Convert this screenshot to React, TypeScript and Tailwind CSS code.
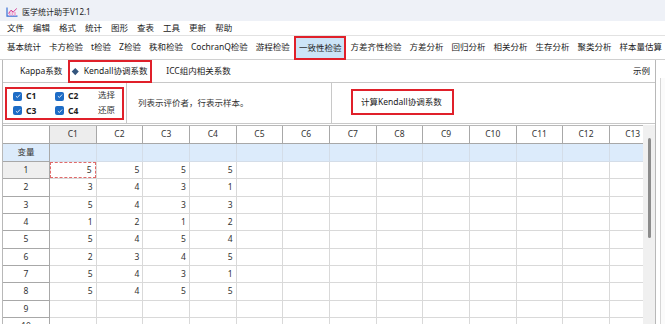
import React from 'react';

const menus = ['文件', '编辑', '格式', '统计', '图形', '查表', '工具', '更新', '帮助'];
const tools = ['基本统计', '卡方检验', 't检验', 'Z检验', '秩和检验', 'CochranQ检验', '游程检验', '一致性检验', '方差齐性检验', '方差分析', '回归分析', '相关分析', '生存分析', '聚类分析', '样本量估算'];
const cols = Array.from({ length: 13 }, (_, i) => `C${i + 1}`);
const data = [
  [5, 5, 5, 5],
  [3, 4, 3, 1],
  [5, 4, 3, 3],
  [1, 2, 1, 2],
  [5, 4, 5, 4],
  [2, 3, 4, 5],
  [5, 4, 3, 1],
  [5, 4, 5, 5],
  [],
  [],
];

const gridCols = 'grid grid-cols-[47px_repeat(13,46.67px)]';

function AppIcon() {
  return (
    <svg viewBox="0 0 12 10" className="w-[12px] h-[10px]">
      <path d="M1 0.5V9.2H11.5" fill="none" stroke="#3a6fd6" strokeWidth="1.2" />
      <rect x="3" y="5.5" width="1.6" height="3.2" fill="#f0a6cf" />
      <rect x="5.6" y="4" width="1.6" height="4.7" fill="#f0a6cf" />
      <rect x="8.2" y="5" width="1.6" height="3.7" fill="#f0a6cf" />
      <path d="M2.5 6.5L5 3.2L7.2 5L10.8 1.5" fill="none" stroke="#d6338f" strokeWidth="1" />
    </svg>
  );
}

function Check({ label }: { label: string }) {
  return (
    <div className="flex items-center">
      <div className="w-[9px] h-[9px] rounded-[2px] bg-[#1d6cc6] flex items-center justify-center">
        <svg viewBox="0 0 8 8" className="w-[6px] h-[6px]">
          <path d="M1.2 4.2L3.2 6L6.8 2" fill="none" stroke="white" strokeWidth="1.1" />
        </svg>
      </div>
      <span className="ml-[4px] font-bold text-[#222]">{label}</span>
    </div>
  );
}

export default function App() {
  return (
    <div
      className="w-[665px] h-[324px] overflow-hidden bg-white text-[8.5px] text-[#333] leading-none"
      style={{ fontFamily: '"Noto Sans", "Noto Sans CJK SC", sans-serif' }}
    >
      {/* title bar */}
      <div className="h-[21px] bg-[#eef1f7] flex items-center pl-[6px] pt-[3px]">
        <AppIcon />
        <span className="ml-[4px] text-[8px] text-[#222]">医学统计助手V12.1</span>
      </div>

      {/* menu bar */}
      <div className="h-[15px] flex items-center gap-[9px] pl-[7px] border-b border-[#e2e2e2] text-[#222]">
        {menus.map(m => (
          <span key={m}>{m}</span>
        ))}
      </div>

      {/* toolbar */}
      <div className="h-[24px] flex items-stretch pl-[3px] border-b border-[#d0d0d0] whitespace-nowrap text-[#222]">
        {tools.map(t =>
          t === '一致性检验' ? (
            <div key={t} className="flex items-center px-[3px] bg-[#cce4f7] border-2 border-[#e0202a] -mb-[1px] z-10">
              {t}
            </div>
          ) : (
            <div key={t} className="flex items-center px-[4px]">
              {t}
            </div>
          )
        )}
      </div>

      <div className="flex h-[264px]">
        <div className="w-[654px] border-l border-r border-[#b8b8b8] ml-[2px] flex flex-col">
          {/* sub tabs */}
          <div className="h-[23px] flex items-center border-b border-[#c8c8c8] text-[#222]">
            <span className="ml-[17px]">Kappa系数</span>
            <div className="ml-[6px] w-[84px] h-[23px] border-2 border-[#e0202a] flex items-center pl-[3px]">
              <div className="w-[4.5px] h-[4.5px] rotate-45 bg-[#34557d]" />
              <span className="ml-[6px]">Kendall协调系数</span>
            </div>
            <span className="ml-[14px]">ICC组内相关系数</span>
            <span className="ml-auto mr-[5px]">示例</span>
          </div>

          {/* options panel */}
          <div className="h-[41px] flex border-b border-[#c8c8c8]">
            <div className="w-[124px] border-r border-[#c8c8c8] pl-[2px] pt-[4px]">
              <div className="w-[119px] h-[33px] border-2 border-[#e0202a] grid grid-cols-[42px_43px_auto] grid-rows-2 items-center pl-[6px]">
                <Check label="C1" />
                <Check label="C2" />
                <span className="-mt-[2px]">选择</span>
                <Check label="C3" />
                <Check label="C4" />
                <span className="-mt-[1px]">还原</span>
              </div>
            </div>
            <div className="w-[205px] border-r border-[#c8c8c8] flex items-center pl-[11px] pt-[1px]">
              列表示评价者，行表示样本。
            </div>
            <div className="flex-1 pl-[19px] pt-[6px]">
              <div className="w-[103px] h-[26px] border-2 border-[#e0202a] flex items-center pl-[8px] text-[#222] whitespace-nowrap">
                计算Kendall协调系数
              </div>
            </div>
          </div>

          {/* data grid */}
          <div className="flex mt-[1px] flex-1 min-h-0">
            <div className="w-[640px] overflow-hidden border-t border-[#b8b8b8]">
              <div className={`${gridCols} h-[18px]`}>
                <div className="border-r border-b border-[#a8a8a8]" />
                {cols.map((c, i) => (
                  <div
                    key={c}
                    className={`flex items-center justify-center border-r border-b border-[#a8a8a8] ${i === 0 ? 'bg-[#ededed]' : 'bg-white'}`}
                  >
                    {c}
                  </div>
                ))}
              </div>
              <div className={`${gridCols} h-[18px] bg-[#dcebfb]`}>
                <div className="flex items-center justify-center border-r border-b border-[#a8a8a8]">变量</div>
                {cols.map(c => (
                  <div key={c} className="border-r border-b border-[#d4dde8]" />
                ))}
              </div>
              {data.map((row, r) => (
                <div key={r} className={`${gridCols} h-[17.33px]`}>
                  <div
                    className={`flex items-center justify-center border-r border-b border-[#a8a8a8] ${r === 0 ? 'bg-[#efefef]' : ''}`}
                  >
                    {r + 1}
                  </div>
                  {cols.map((c, ci) => (
                    <div key={c} className="border-r border-b border-[#d9d9d9] flex">
                      <div
                        className={`flex-1 flex items-center justify-end pr-[3px] ${r === 0 && ci === 0 ? 'border border-dashed border-[#e06a6a]' : ''}`}
                      >
                        {row[ci] ?? ''}
                      </div>
                    </div>
                  ))}
                </div>
              ))}
            </div>
            <div className="w-[12px] bg-[#f0f0f0] pt-[13px] flex justify-center">
              <div className="w-[3px] h-[100px] rounded-full bg-[#8c8c8c]" />
            </div>
          </div>
        </div>

        {/* right outer strip */}
        <div className="flex-1 pl-[4px] pt-[18px]">
          <div className="h-full border-l border-[#d6d6d6] bg-[#fbfbfb]" />
        </div>
      </div>
    </div>
  );
}
